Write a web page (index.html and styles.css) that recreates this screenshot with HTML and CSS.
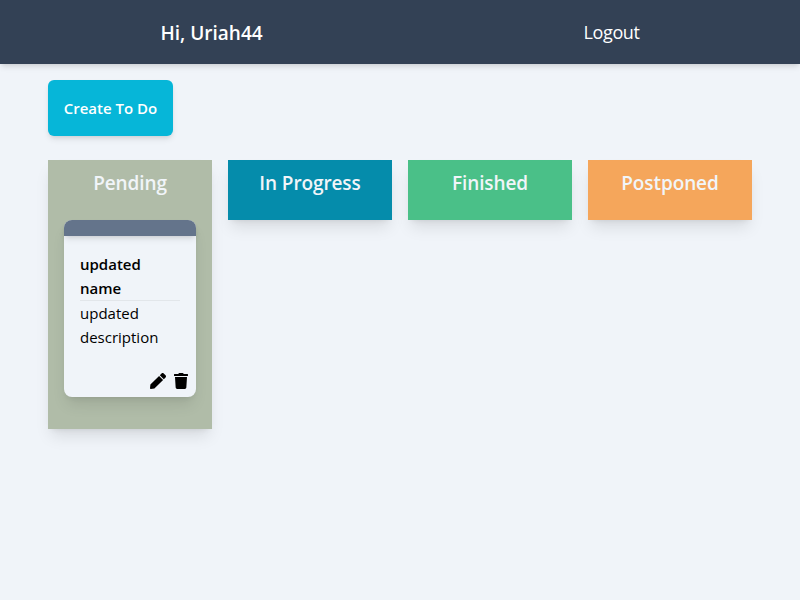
FILE: index.html
```html
<!DOCTYPE html>
<html lang="en">
<head>
<meta charset="utf-8">
<title>To Do</title>
<link rel="stylesheet" href="styles.css">
</head>
<body>
<header class="navbar">
  <h1 class="greeting">Hi, Uriah44</h1>
  <a class="logout">Logout</a>
</header>
<main class="content">
  <button class="create">Create To Do</button>
  <div class="board">
    <section class="column pending">
      <h2 class="column-title">Pending</h2>
      <article class="card">
        <div class="card-bar"></div>
        <div class="card-body">
          <h3 class="card-title">updated name</h3>
          <p class="card-text">updated description</p>
        </div>
        <div class="card-actions">
          <svg width="16" height="16" viewBox="0 0 512 512"><path d="M290.74 93.24l128.02 128.02-277.99 277.99-114.14 12.6C11.35 513.54-1.56 500.62.14 485.34l12.7-114.22 277.9-277.88zm207.2-19.06l-60.11-60.11c-18.75-18.75-49.16-18.75-67.91 0l-56.55 56.55 128.02 128.02 56.55-56.55c18.75-18.76 18.75-49.16 0-67.91z"/></svg>
          <svg width="14" height="16" viewBox="0 0 448 512"><path d="M432 32H312l-9.4-18.7A24 24 0 0 0 281.1 0H166.8a23.72 23.72 0 0 0-21.4 13.3L136 32H16A16 16 0 0 0 0 48v32a16 16 0 0 0 16 16h416a16 16 0 0 0 16-16V48a16 16 0 0 0-16-16zM53.2 467a48 48 0 0 0 47.9 45h245.8a48 48 0 0 0 47.9-45L416 128H32z"/></svg>
        </div>
      </article>
    </section>
    <section class="column progress"><h2 class="column-title">In Progress</h2></section>
    <section class="column finished"><h2 class="column-title">Finished</h2></section>
    <section class="column postponed"><h2 class="column-title">Postponed</h2></section>
  </div>
</main>
</body>
</html>
```
FILE: styles.css
```css
* { box-sizing: border-box; margin: 0; padding: 0; }

body {
  min-height: 100vh;
  background: #f0f4f9;
  color: #000;
  font: 16px/24px "Segoe UI", "Open Sans", "Noto Sans", sans-serif;
}

.navbar {
  display: flex;
  justify-content: space-around;
  align-items: center;
  height: 64px;
  padding-top: 2px;
  background: #334155;
  color: #fff;
  box-shadow: 0 4px 6px -1px rgb(0 0 0 / .1), 0 2px 4px -2px rgb(0 0 0 / .1);
}

.greeting { font-size: 19px; line-height: 28px; font-weight: 600; }
.logout { margin-top: -2px; font-size: 18px; line-height: 28px; letter-spacing: -.4px; }

.content { padding: 16px 48px; }

.create {
  display: block;
  width: 125px;
  height: 56px;
  border: 0;
  border-radius: 6px;
  background: #06b6d8;
  color: #fff;
  font: 600 15px/24px "Segoe UI", "Open Sans", "Noto Sans", sans-serif;
  letter-spacing: 0;
  white-space: nowrap;
  box-shadow: 0 4px 6px -1px rgb(0 0 0 / .1), 0 2px 4px -2px rgb(0 0 0 / .1);
}

.board {
  display: grid;
  grid-template-columns: repeat(4, 1fr);
  gap: 16px;
  align-items: start;
  margin-top: 24px;
}

.column {
  padding: 8px 16px 0;
  box-shadow: 0 10px 15px -3px rgb(0 0 0 / .1), 0 4px 6px -4px rgb(0 0 0 / .1);
}
.pending { background: #b0bca8; padding-bottom: 32px; }
.progress { background: #058cab; }
.finished { background: #4ac088; }
.postponed { background: #f5a65b; }

.column-title {
  height: 52px;
  color: #f1f5f9;
  font-size: 19px;
  line-height: 30px;
  font-weight: 600;
  letter-spacing: -.1px;
  text-align: center;
  white-space: nowrap;
}

.card {
  height: 177px;
  display: flex;
  flex-direction: column;
  border-radius: 8px;
  background: #f0f4f9;
  box-shadow: 0 10px 15px -3px rgb(0 0 0 / .1), 0 4px 6px -4px rgb(0 0 0 / .1);
}
.card-bar {
  height: 16px;
  border-radius: 8px 8px 0 0;
  background: #64748b;
  box-shadow: 0 4px 6px -1px rgb(0 0 0 / .1), 0 2px 4px -2px rgb(0 0 0 / .1);
}
.card-body { flex: 1; padding: 16px 16px 0; }
.card-title {
  border-bottom: 1px solid #e2e6ea;
  font-size: 15px;
  line-height: 24px;
  font-weight: 600;
}
.card-text { font-size: 15px; }
.card-actions { display: flex; justify-content: flex-end; gap: 8px; padding: 0 8px 8px; }
```
